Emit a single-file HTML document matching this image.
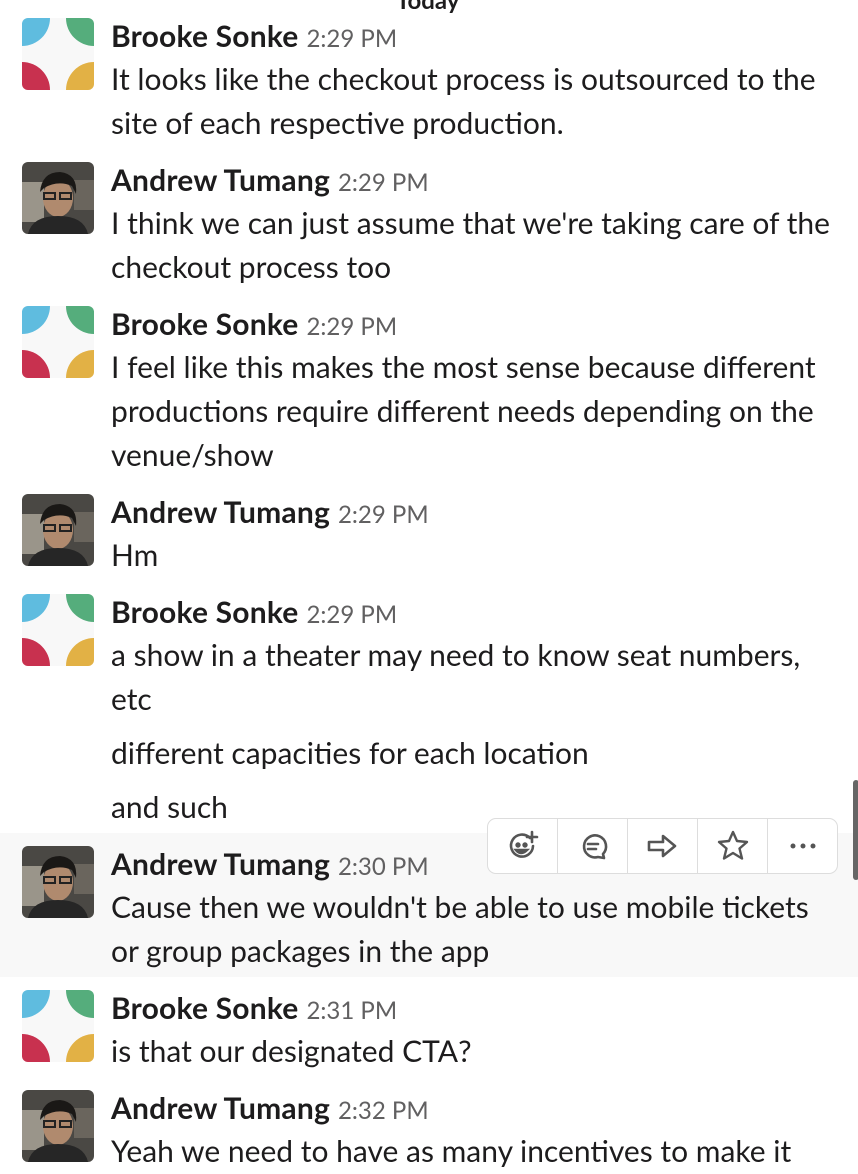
<!DOCTYPE html>
<html><head><meta charset="utf-8"><style>
body{margin:0;width:858px;height:1174px;background:#fff;position:relative;overflow:hidden;font-family:"Lato","Liberation Sans",sans-serif;color:#1d1c1d}
.a{position:absolute;left:22px;width:72px;height:72px;border-radius:6px;overflow:hidden}
.n{position:absolute;left:111px;font-size:30px;font-weight:bold;white-space:nowrap;letter-spacing:0.2px;line-height:36px}
.n span{font-weight:normal;font-size:24px;color:#616061;margin-left:8px;letter-spacing:0}
.t{position:absolute;left:111px;font-size:30px;white-space:nowrap;line-height:44px;letter-spacing:0}
.hov{position:absolute;left:0;top:833px;width:858px;height:144px;background:#f8f8f8}
.bar{position:absolute;left:487px;top:818px;width:349px;height:54px;border:1px solid #ddd;border-radius:9px;background:#fff;display:flex}
.bar div{flex:1;border-right:1px solid #ddd;display:flex;align-items:center;justify-content:center}
.bar div:last-child{border-right:none}
</style></head><body>
<div style="position:absolute;left:396px;top:-14px;font-size:24px;font-weight:bold;">Today</div>

<svg width="0" height="0" style="position:absolute"><defs>
<symbol id="slk" viewBox="0 0 72 72"><rect width="72" height="72" fill="#f8f8f8"/><circle cx="0" cy="0" r="28" fill="#5fbcdf"/><circle cx="72" cy="0" r="28" fill="#55ad7c"/><circle cx="0" cy="72" r="28" fill="#c8314f"/><circle cx="72" cy="72" r="28" fill="#e2b145"/></symbol>
<symbol id="per" viewBox="0 0 72 72"><rect width="72" height="72" fill="#4a4844"/><rect x="0" y="20" width="22" height="40" fill="#9a958a"/><rect x="52" y="18" width="20" height="30" fill="#6a655d"/><ellipse cx="36" cy="36" rx="15" ry="19" fill="#b08a6e"/><path d="M18 30 Q20 10 38 10 Q56 12 54 32 L50 24 Q36 18 22 26Z" fill="#1a1816"/><rect x="22" y="31" width="11" height="6" fill="none" stroke="#222" stroke-width="2"/><rect x="38" y="31" width="11" height="6" fill="none" stroke="#222" stroke-width="2"/><path d="M6 72 Q10 54 36 54 Q62 54 66 72Z" fill="#262626"/></symbol>
</defs></svg>

<div class="hov"></div>

<svg class="a" style="top:18px"><use href="#slk"/></svg>
<div class="n" style="top:18px">Brooke Sonke<span>2:29 PM</span></div>
<div class="t" style="top:57px">It looks like the checkout process is outsourced to the</div>
<div class="t" style="top:101px">site of each respective production.</div>

<svg class="a" style="top:162px"><use href="#per"/></svg>
<div class="n" style="top:162px">Andrew Tumang<span>2:29 PM</span></div>
<div class="t" style="top:201px">I think we can just assume that we're taking care of the</div>
<div class="t" style="top:245px">checkout process too</div>

<svg class="a" style="top:306px"><use href="#slk"/></svg>
<div class="n" style="top:306px">Brooke Sonke<span>2:29 PM</span></div>
<div class="t" style="top:345px">I feel like this makes the most sense because different</div>
<div class="t" style="top:389px">productions require different needs depending on the</div>
<div class="t" style="top:433px">venue/show</div>

<svg class="a" style="top:494px"><use href="#per"/></svg>
<div class="n" style="top:494px">Andrew Tumang<span>2:29 PM</span></div>
<div class="t" style="top:533px">Hm</div>

<svg class="a" style="top:594px"><use href="#slk"/></svg>
<div class="n" style="top:594px">Brooke Sonke<span>2:29 PM</span></div>
<div class="t" style="top:633px">a show in a theater may need to know seat numbers,</div>
<div class="t" style="top:677px">etc</div>
<div class="t" style="top:731px">different capacities for each location</div>
<div class="t" style="top:785px">and such</div>

<svg class="a" style="top:846px"><use href="#per"/></svg>
<div class="n" style="top:846px">Andrew Tumang<span>2:30 PM</span></div>
<div class="t" style="top:885px">Cause then we wouldn't be able to use mobile tickets</div>
<div class="t" style="top:929px">or group packages in the app</div>

<svg class="a" style="top:990px"><use href="#slk"/></svg>
<div class="n" style="top:990px">Brooke Sonke<span>2:31 PM</span></div>
<div class="t" style="top:1029px">is that our designated CTA?</div>

<svg class="a" style="top:1090px"><use href="#per"/></svg>
<div class="n" style="top:1090px">Andrew Tumang<span>2:32 PM</span></div>
<div class="t" style="top:1129px">Yeah we need to have as many incentives to make it</div>

<div class="bar">
<div><svg width="34" height="34" viewBox="0 0 34 34" fill="none" stroke="#555" stroke-width="2.6" stroke-linecap="round"><path d="M24 9 A11 11 0 1 0 27 17"/><path d="M26 3v10M21 8h10"/><circle cx="12" cy="16" r="1.4" fill="#555"/><circle cx="19" cy="16" r="1.4" fill="#555"/><path d="M10 21 Q15 27 21 21Z" fill="#555"/></svg></div>
<div><svg width="34" height="34" viewBox="0 0 34 34" fill="none" stroke="#555" stroke-width="2.6" stroke-linecap="round" stroke-linejoin="round"><path d="M27 25 A11 11 0 1 0 22 28 L28 29 Z"/><path d="M12 15h10M12 20h8"/></svg></div>
<div><svg width="36" height="34" viewBox="0 0 36 34" fill="none" stroke="#555" stroke-width="2.6" stroke-linejoin="round"><path d="M4 13h14V7l12 10-12 10v-6H4z"/></svg></div>
<div><svg width="34" height="34" viewBox="0 0 34 34" fill="none" stroke="#555" stroke-width="2.4" stroke-linejoin="round"><path d="M17 3l4 9 10 1-7.5 6.5 2.5 10L17 24l-9 5.5 2.5-10L3 13l10-1z"/></svg></div>
<div><svg width="34" height="34" viewBox="0 0 34 34" fill="#555"><circle cx="7" cy="17" r="2.5"/><circle cx="17" cy="17" r="2.5"/><circle cx="27" cy="17" r="2.5"/></svg></div>
</div>
<div style="position:absolute;left:853px;top:780px;width:6px;height:100px;background:#666;border-radius:3px"></div>
</body></html>
